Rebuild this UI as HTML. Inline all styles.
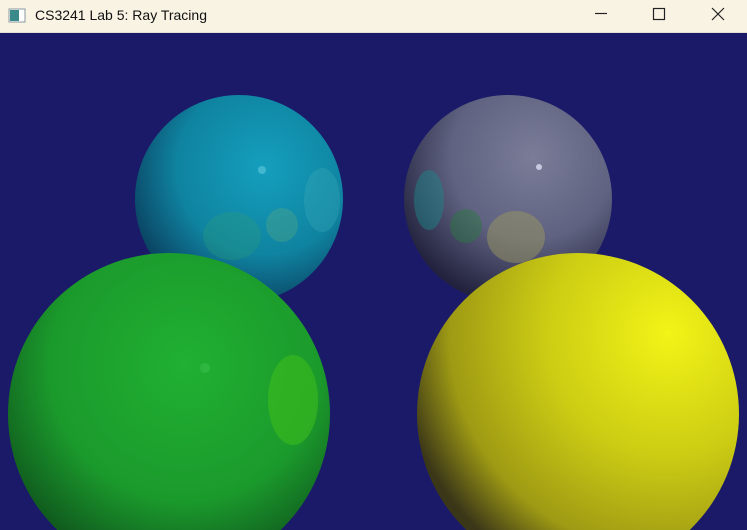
<!DOCTYPE html>
<html><head><style>
html,body{margin:0;width:747px;height:530px;overflow:hidden;background:#1b1a69;font-family:"Liberation Sans",sans-serif}
.tb{position:absolute;left:0;top:0;width:747px;height:33px;background:#f9f3e4;box-sizing:border-box;border-bottom:1px solid #e6e0d2}
.t{position:absolute;left:35px;top:7px;font-size:14px;color:#111}
svg{position:absolute;left:0;top:0}
</style></head><body>
<svg width="747" height="530">
<defs>
<radialGradient id="cy" cx="0.62" cy="0.35" r="0.7"><stop offset="0" stop-color="#149fbd"/><stop offset="0.6" stop-color="#0f83a0"/><stop offset="1" stop-color="#0a3f5e"/></radialGradient>
<radialGradient id="gr" cx="0.62" cy="0.3" r="0.72"><stop offset="0" stop-color="#7a7c98"/><stop offset="0.55" stop-color="#5f6280"/><stop offset="1" stop-color="#22223e"/></radialGradient>
<radialGradient id="gn" cx="0.55" cy="0.35" r="0.7"><stop offset="0" stop-color="#20b032"/><stop offset="0.6" stop-color="#1b9a2c"/><stop offset="1" stop-color="#0d4a1a"/></radialGradient>
<radialGradient id="ye" cx="0.78" cy="0.25" r="0.85"><stop offset="0" stop-color="#f2f416"/><stop offset="0.45" stop-color="#cccc14"/><stop offset="0.8" stop-color="#9e9a14"/><stop offset="1" stop-color="#3a3618"/></radialGradient>
</defs>
<circle cx="239" cy="199" r="104" fill="url(#cy)"/>
<ellipse cx="232" cy="236" rx="29" ry="24" fill="#2a9a7a" opacity=".35"/>
<ellipse cx="282" cy="225" rx="16" ry="17" fill="#5aa880" opacity=".35"/>
<ellipse cx="322" cy="200" rx="18" ry="32" fill="#3aa8b8" opacity=".35"/>
<circle cx="262" cy="170" r="4" fill="#60c8dc" opacity=".6"/>
<circle cx="508" cy="199" r="104" fill="url(#gr)"/>
<ellipse cx="429" cy="200" rx="15" ry="30" fill="#1a8a8a" opacity=".45"/>
<ellipse cx="466" cy="226" rx="16" ry="17" fill="#2a7a40" opacity=".45"/>
<ellipse cx="516" cy="237" rx="29" ry="26" fill="#9a9660" opacity=".5"/>
<circle cx="539" cy="167" r="3" fill="#c8c8e0"/>
<circle cx="169" cy="414" r="161" fill="url(#gn)"/>
<ellipse cx="293" cy="400" rx="25" ry="45" fill="#3cbc1c" opacity=".6"/>
<circle cx="205" cy="368" r="5" fill="#40c050" opacity=".5"/>
<circle cx="578" cy="414" r="161" fill="url(#ye)"/>
</svg>
<div class="tb">
<svg width="20" height="16" style="left:8px;top:8px"><rect x="1" y="1" width="16" height="13" fill="#fff" stroke="#8a9aa0"/><rect x="2" y="2" width="9" height="11" fill="#3a8a8a"/></svg>
<div class="t">CS3241 Lab 5: Ray Tracing</div>
<svg width="747" height="32"><g stroke="#222" stroke-width="1.2" fill="none">
<line x1="595" y1="13.5" x2="607" y2="13.5"/>
<rect x="653.5" y="8.5" width="11" height="11"/>
<line x1="712" y1="8" x2="724" y2="20"/><line x1="724" y1="8" x2="712" y2="20"/></g></svg>
</div>
</body></html>
